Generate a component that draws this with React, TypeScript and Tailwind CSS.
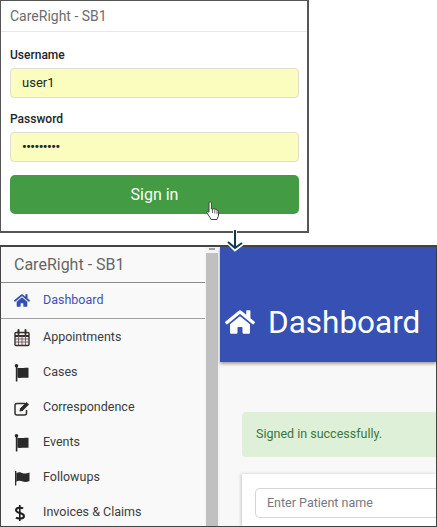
import { FaHome } from "react-icons/fa";
import type { ReactNode } from "react";

function CalendarIcon() {
  return (
    <svg width="16" height="18" viewBox="0 0 16 18" fill="none" stroke="#33302e">
      <rect x="1" y="3.5" width="14" height="13" rx="1" strokeWidth="1.4" fill="#f4ecec" />
      <path d="M1 7h14" strokeWidth="2" />
      <path d="M1 10h14M1 13h14M4.5 7v9M8 7v9M11.5 7v9" strokeWidth="0.9" stroke="#6b5a5e" />
      <path d="M4.5 1v4M11.5 1v4" strokeWidth="2" strokeLinecap="round" />
    </svg>
  );
}

function FlagIcon() {
  return (
    <svg width="16" height="18" viewBox="0 0 16 18">
      <circle cx="2.5" cy="1.800" r="1.800" fill="#2a2a2a" />
      <path d="M1.800 2h1.600v15.500H1.800z" fill="#2a2a2a" />
      <path d="M3.400 3.800c3 .8 6-.2 11.100 0v10c-4-.4-7.500.3-11.100 0z" fill="#2a2a2a" />
    </svg>
  );
}

function WaveFlagIcon() {
  return (
    <svg width="16" height="18" viewBox="0 0 16 18">
      <path d="M1 2h1.300v14.500H1z" fill="#2a2a2a" />
      <path d="M2.300 4c3-1.500 4.500-.5 6.500.2 2 .6 4 .4 6.700-.7v8.500c-2.500 1.200-4.700 1.300-6.700.6-2-.8-3.500-1.600-6.500.2z" fill="#2a2a2a" />
    </svg>
  );
}

function EditIcon() {
  return (
    <svg width="16" height="18" viewBox="0 0 16 18" fill="none">
      <path d="M11 4.500H3a2 2 0 0 0-2 2v7.500a2 2 0 0 0 2 2h7.500a2 2 0 0 0 2-2v-3" stroke="#33302e" strokeWidth="1.500" />
      <path d="M6 9.500l6.500-6.500 2.500 2.500-6.500 6.500-3 .6z" fill="#2a2a2a" />
    </svg>
  );
}

function DollarIcon() {
  return (
    <svg width="16" height="18" viewBox="0 0 16 18" fill="none" stroke="#1c1c1c" strokeWidth="2">
      <path d="M9 4.500C8 3.500 2 3 2 6.200c0 3.300 8 2.200 8 5.800 0 3.200-6 3-8 1.600" />
      <path d="M5.800 1v16" strokeWidth="1.600" />
    </svg>
  );
}

type NavItem = { name: string; icon: ReactNode };

const items: NavItem[] = [
  { name: "Appointments", icon: <CalendarIcon /> },
  { name: "Cases", icon: <FlagIcon /> },
  { name: "Correspondence", icon: <EditIcon /> },
  { name: "Events", icon: <FlagIcon /> },
  { name: "Followups", icon: <WaveFlagIcon /> },
  { name: "Invoices & Claims", icon: <DollarIcon /> },
];

function Field({ label, value, dots }: { label: string; value: string; dots?: boolean }) {
  return (
    <div className="flex flex-col">
      <label className="text-[12px] leading-[14px] font-medium text-[#212529]">{label}</label>
      <div
        className={`mt-[6px] flex h-[30px] items-center rounded-[4px] border border-[#dfdfcf] bg-[#fafdbd] pl-[11px] text-[#212529] ${
          dots ? "text-[13px] font-bold tracking-[-0.5px]" : "text-[13px]"
        }`}
      >
        {value}
      </div>
    </div>
  );
}

function LoginCard() {
  return (
    <div className="relative h-[233px] w-[309px] border-r-2 border-b-2 border-l border-t border-[#555] bg-white">
      <div className="flex h-[31px] items-center border-b border-[#e8e8e8] pl-[9px] text-[14px] text-[#6c6c6c]">
        CareRight - SB1
      </div>
      <div className="flex flex-col pt-[16px] pr-[8px] pl-[9px]">
        <Field label="Username" value="user1" />
        <div className="h-[14px]" />
        <Field label="Password" value="•••••••••" dots />
        <button className="mt-[13px] h-[39px] rounded-[5px] bg-[#439b43] text-[16px] text-white">Sign in</button>
      </div>
      <svg className="absolute left-[204px] top-[200px]" width="16" height="20" viewBox="0 0 16 20">
        <path
          d="M4 2a1.200 1.200 0 0 1 2.400 0v6l1.500-.2 1.500.2 1.500.3 1.600.7c.7.4 1 1 1 2v3c0 1-.4 2-1 3l-.5 1.500H6l-1-2-3-4.500c-.6-1 .7-1.900 1.500-1L4 11z"
          fill="#fff"
          stroke="#444"
          strokeWidth="1"
          strokeLinejoin="round"
        />
        <path d="M7.500 8v4M9.800 8.500v4M12 9v4" stroke="#444" strokeWidth="0.8" />
      </svg>
    </div>
  );
}

function Sidebar() {
  return (
    <div className="flex w-[204px] shrink-0 flex-col overflow-hidden bg-[#f9f9f9]">
      <div className="flex h-[36px] shrink-0 items-center border-b border-[#8a8a8a] pl-[13px] text-[16px] text-[#666]">
        CareRight - SB1
      </div>
      <div className="flex h-[36px] shrink-0 items-center border-b border-[#a0a0a0]">
        <FaHome className="ml-[13px] h-[15px] w-[16px] text-[#3550b0]" />
        <span className="ml-[13px] text-[12.5px] text-[#3f51b5]">Dashboard</span>
      </div>
      <div className="flex flex-col pt-[1px]">
        {items.map((item) => (
          <div key={item.name} className="flex h-[35px] shrink-0 items-center text-[#3c3c3c]">
            <span className="ml-[13px] flex w-[16px] justify-center">{item.icon}</span>
            <span className="ml-[13px] text-[12.5px]">{item.name}</span>
          </div>
        ))}
      </div>
    </div>
  );
}

function Main() {
  return (
    <div className="flex min-w-0 flex-1 flex-col bg-[#f8f8f8]">
      <div className="flex h-[115px] shrink-0 items-end bg-[#3650b3] pb-[21px] pl-[5px] text-white shadow-[0_2px_3px_rgba(0,0,0,0.35)]">
        <FaHome className="mb-[5px] h-[28px] w-[30px]" />
        <span className="ml-[13px] text-[31.5px] leading-[36px]">Dashboard</span>
      </div>
      <div className="mt-[50px] ml-[22px] flex h-[45px] shrink-0 items-center rounded-l-[4px] bg-[#dff0d8] pl-[14px] text-[12.5px] text-[#3c763d]">
        Signed in successfully.
      </div>
      <div className="mt-[17px] ml-[22px] flex-1 bg-white pt-[14px] pl-[13px] shadow-[-1px_0_3px_rgba(0,0,0,0.2)]">
        <div className="flex h-[30px] items-center rounded-l-[5px] border border-r-0 border-[#d5d5d5] pl-[11px] text-[12.5px] text-[#77777f]">
          Enter Patient name
        </div>
      </div>
    </div>
  );
}

export default function App() {
  return (
    <div className="relative h-[527px] w-[437px] overflow-hidden bg-white font-['Roboto',sans-serif]">
      <LoginCard />
      <div className="mt-[12px] flex h-[282px] border border-t-2 border-[#444] border-b-[#444]">
        <Sidebar />
        <div className="flex w-[15px] shrink-0 flex-col items-center bg-[#f4f4f4] pr-[1px]">
          <div className="mt-[1px] h-[2px] w-[6px] bg-[#a0a0a0]" />
          <div className="mt-[3px] w-[12px] flex-1 bg-[#c0c0c0]" />
        </div>
        <Main />
      </div>
      <svg className="absolute left-[224px] top-[229px]" width="24" height="24" viewBox="0 0 24 24" fill="none">
        <path d="M11 1v19M3 12l8 8 8-6" stroke="#fff" strokeWidth="4" />
        <path d="M11 1v18M4 13l7 6 7-5" stroke="#12384f" strokeWidth="2" />
      </svg>
    </div>
  );
}
